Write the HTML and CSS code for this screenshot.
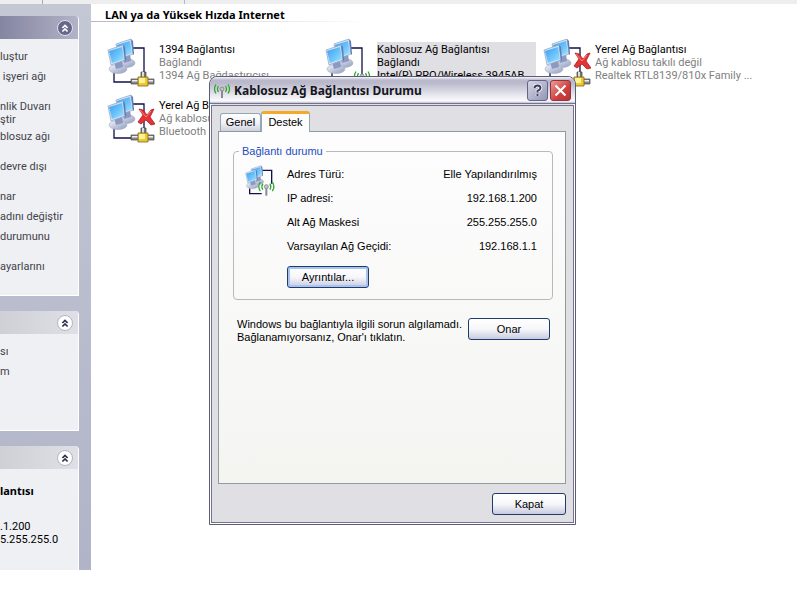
FILE: index.html
```html
<!DOCTYPE html>
<html lang="tr">
<head>
<meta charset="utf-8">
<title>Ağ Bağlantıları</title>
<link rel="stylesheet" href="styles.css">
</head>
<body>
<svg class="defs" aria-hidden="true">
  <defs>
    <linearGradient id="screen" x1="0" y1="0" x2="1" y2="1">
      <stop offset="0" stop-color="#3a9df0"/><stop offset="0.55" stop-color="#6cc4fb"/><stop offset="1" stop-color="#a5e6fd"/>
    </linearGradient>
    <linearGradient id="foot" x1="0" y1="0" x2="1" y2="1">
      <stop offset="0" stop-color="#f4f6fb"/><stop offset="1" stop-color="#8f9bbd"/>
    </linearGradient>
    <g id="monitor">
      <ellipse cx="11" cy="27" rx="9" ry="4.500" fill="url(#foot)" stroke="#a3abc6" stroke-width="0.600"/>
      <path d="M7 20l8-2 1 7-7 2z" fill="#8c99c2"/>
      <path d="M1 8L16 3l2 15-14 5z" fill="#d4e3f6" stroke="#8aa2c6" stroke-width="0.700"/>
      <path d="M2 9l13-4 2 12-12 4z" fill="url(#screen)"/>
      <path d="M16 3l2 2 1 13-1 1z" fill="#5d7db4"/>
    </g>
    <g id="pair">
      <use href="#monitor" x="8" y="-2"/>
      <use href="#monitor" x="0" y="4"/>
    </g>
    <g id="plug">
      <path d="M34 34h5v6h-5z" fill="#777" stroke="#444" stroke-width="0.700"/><path d="M35 34h2v6h-2z" fill="#ddd"/>
      <path d="M24 41h23v5H24z" fill="#888" stroke="#444" stroke-width="0.700"/><path d="M25 42h21v1.500H25z" fill="#eee"/>
      <path d="M31 39h10v9H31z" fill="#edc82e" stroke="#76651a" stroke-width="0.800"/><path d="M32 40h6v5h-6z" fill="#fff09a"/>
    </g>
    <g id="cross">
      <path d="M34 18l4 1 4 5 4-5 3-1-4 8 5 7-4 1-5-5-5 4-3-2 5-7z" fill="#e23437" stroke="#b01c22" stroke-width="0.800"/>
      <path d="M35 19l6 7 5-6" fill="none" stroke="#f78a82" stroke-width="1"/>
    </g>
    <g id="antenna" fill="none">
      <path d="M8 8v8" stroke="#8a8a94" stroke-width="2"/>
      <circle cx="8" cy="7" r="2" fill="#bfc4c9" stroke="#7d8288" stroke-width="0.800"/>
      <path d="M4.500 4Q2.500 7 4.500 10M11.500 4Q13.500 7 11.500 10M2 2.500Q-1 7 2 11.500M14 2.500Q17 7 14 11.500" stroke="#2fa52f" stroke-width="1.300"/>
    </g>
    <g id="chevrons" fill="none" stroke-width="2">
      <path d="M5 8l3-3 3 3M5 12l3-3 3 3"/>
    </g>
  </defs>
</svg>

<div class="toolbar-edge"><span class="first-tick"></span><span class="second-tick"></span></div>

<div class="explorer">
  <aside class="tasks">
    <section class="panel panel-main">
      <header><button class="collapse dark" type="button" aria-label="Daralt"><svg viewBox="0 0 16 16"><use href="#chevrons"/></svg></button></header>
      <ul>
        <li><a href="#">luştur</a></li>
        <li class="tall"><a href="#">&nbsp;işyeri ağı</a></li>
        <li class="tall"><a href="#">nlik Duvarı<br>ştir</a></li>
        <li class="tall"><a href="#">blosuz ağı</a></li>
        <li class="tall"><a href="#">devre dışı</a></li>
        <li><a href="#">nar</a></li>
        <li><a href="#">adını değiştir</a></li>
        <li class="tall"><a href="#">durumunu</a></li>
        <li class="tall"><a href="#">ayarlarını</a></li>
      </ul>
    </section>
    <section class="panel panel-places">
      <header><button class="collapse" type="button" aria-label="Daralt"><svg viewBox="0 0 16 16"><use href="#chevrons"/></svg></button></header>
      <ul>
        <li><a href="#">sı</a></li>
        <li><a href="#">m</a></li>
      </ul>
    </section>
    <section class="panel panel-details">
      <header><button class="collapse" type="button" aria-label="Daralt"><svg viewBox="0 0 16 16"><use href="#chevrons"/></svg></button></header>
      <div class="details">
        <strong>lantısı</strong>
        <p>.1.200<br>5.255.255.0</p>
      </div>
    </section>
  </aside>

  <main class="connections">
    <h1>LAN ya da Yüksek Hızda Internet</h1>
    <div class="tiles">
      <article class="tile">
        <svg class="tile-icon" viewBox="0 0 48 50"><path d="M26 10h11v26M7 35v9h18" fill="none" stroke="#10104c" stroke-width="1.300"/><use href="#pair"/><use href="#plug"/></svg>
        <div class="tile-text"><h2>1394 Bağlantısı</h2><p>Bağlandı</p><p>1394 Ağ Bağdaştırıcısı</p></div>
      </article>
      <article class="tile selected">
        <svg class="tile-icon" viewBox="0 0 48 50"><path d="M26 10h11v26M7 35v9h18" fill="none" stroke="#10104c" stroke-width="1.300"/><use href="#pair"/><use href="#antenna" x="29" y="31"/></svg>
        <div class="tile-text"><h2>Kablosuz Ağ Bağlantısı</h2><p>Bağlandı</p><p>Intel(R) PRO/Wireless 3945AB</p></div>
      </article>
      <article class="tile">
        <svg class="tile-icon" viewBox="0 0 48 50"><path d="M26 10h11v26M7 35v9h18" fill="none" stroke="#10104c" stroke-width="1.300"/><use href="#pair"/><use href="#plug"/><use href="#cross" x="-2" y="-3"/></svg>
        <div class="tile-text"><h2>Yerel Ağ Bağlantısı</h2><p>Ağ kablosu takılı değil</p><p>Realtek RTL8139/810x Family ...</p></div>
      </article>
      <article class="tile">
        <svg class="tile-icon" viewBox="0 0 48 50"><path d="M26 10h11v26M7 35v9h18" fill="none" stroke="#10104c" stroke-width="1.300"/><use href="#pair"/><use href="#plug"/><use href="#cross" x="-2" y="-3"/></svg>
        <div class="tile-text"><h2>Yerel Ağ B</h2><p>Ağ kablosu</p><p>Bluetooth</p></div>
      </article>
    </div>
  </main>
</div>

<div class="dialog" role="dialog" aria-labelledby="dialog-title">
  <div class="titlebar">
    <svg class="title-icon" viewBox="0 0 16 16"><use href="#antenna"/></svg>
    <h2 id="dialog-title">Kablosuz Ağ Bağlantısı Durumu</h2>
    <button class="caption help" type="button" aria-label="Yardım"><svg viewBox="0 0 19 19"><path d="M6.500 7Q6.500 4.500 9.500 4.500T12.500 7Q12.500 8.500 9.500 10v1.500M9.500 13v2" fill="none" stroke="#fff" stroke-width="3.500"/><path d="M6.500 7Q6.500 4.500 9.500 4.500T12.500 7Q12.500 8.500 9.500 10v1.500M9.500 13v2" fill="none" stroke="#3b3d5c" stroke-width="2"/></svg></button>
    <button class="caption close" type="button" aria-label="Kapat"><svg viewBox="0 0 19 19"><path d="M4.500 4.500l10 10M14.500 4.500l-10 10" stroke="#fff" stroke-width="2.200"/></svg></button>
  </div>
  <div class="dialog-body">
    <div class="tabs" role="tablist">
      <button class="tab" type="button" role="tab" aria-selected="false">Genel</button>
      <button class="tab active" type="button" role="tab" aria-selected="true">Destek</button>
    </div>
    <div class="page" role="tabpanel">
      <fieldset>
        <legend>Bağlantı durumu</legend>
        <svg class="status-icon" viewBox="0 0 48 48"><path d="M26 8h14v20M7 35v8h18" fill="none" stroke="#10104c" stroke-width="2"/><use href="#pair"/><g transform="translate(20 22) scale(1.500)"><use href="#antenna"/></g></svg>
        <div class="status">
          <dl>
            <div><dt>Adres Türü:</dt><dd>Elle Yapılandırılmış</dd></div>
            <div><dt>IP adresi:</dt><dd>192.168.1.200</dd></div>
            <div><dt>Alt Ağ Maskesi</dt><dd>255.255.255.0</dd></div>
            <div><dt>Varsayılan Ağ Geçidi:</dt><dd>192.168.1.1</dd></div>
          </dl>
          <button class="push default" type="button">Ayrıntılar...</button>
        </div>
      </fieldset>
      <div class="repair">
        <p>Windows bu bağlantıyla ilgili sorun algılamadı.<br>Bağlanamıyorsanız, Onar'ı tıklatın.</p>
        <button class="push" type="button">Onar</button>
      </div>
    </div>
    <div class="actions"><button class="push narrow" type="button">Kapat</button></div>
  </div>
</div>
</body>
</html>
```
FILE: styles.css
```css
* { box-sizing: border-box; }

body {
  margin: 0;
  position: relative;
  overflow: hidden;
  background: #fff;
  color: #000;
  font: 11px/13px Roboto, sans-serif;
}

h1, h2, p, ul, dl, dd { margin: 0; padding: 0; }
h1, h2 { font-size: inherit; }
button { font: inherit; color: inherit; padding: 0; }

.defs { position: absolute; width: 0; height: 0; }

.toolbar-edge { display: flex; height: 4px; background: #efeeee; }
.first-tick { width: 43px; border-right: 1px solid #aaa; }
.second-tick { width: 142px; border-right: 1px solid #b5b5d0; }

.explorer { display: flex; align-items: flex-start; }

/* Task pane */
.tasks {
  flex: none;
  width: 91px;
  padding: 12px 12px 0 0;
  display: flex;
  flex-direction: column;
  gap: 15px;
  background: linear-gradient(#c4c8d4, #b1b3c8);
}

.panel {
  background: #eff0f4;
  border-right: 1px solid #fff;
  border-bottom: 1px solid #fff;
  border-top-right-radius: 4px;
  white-space: nowrap;
}
.panel header {
  display: flex;
  justify-content: flex-end;
  align-items: center;
  height: 23px;
  padding-right: 5px;
  border-top-right-radius: 3px;
  background: linear-gradient(90deg, #cfd0d5, #dfdfe7);
}
.panel-main header { background: linear-gradient(90deg, #8485a0, #b2b3c6); }

.collapse {
  width: 16px;
  height: 16px;
  border: 1px solid #b4b4c4;
  border-radius: 50%;
  background: #fff;
  stroke: #30304e;
}
.collapse.dark { border-color: #e2e2ee; background: #66678a; stroke: #fff; }
.collapse svg { display: block; width: 14px; height: 14px; }

.panel ul {
  display: flex;
  flex-direction: column;
  gap: 4px;
  padding: 11px 0 9px;
  list-style: none;
}
.panel li { min-height: 16px; }
.panel li.tall { min-height: 26px; }
.panel a { color: #42424a; text-decoration: none; }
.panel-places ul { padding-bottom: 49px; }
.panel-details { border-bottom: 0; }
.details { padding: 15px 0 24px; }
.details strong { font-family: "Noto Sans", sans-serif; }
.details p { padding-top: 22px; }

/* Connection list */
.connections { flex: 1; min-width: 0; }
.connections h1 {
  padding: 4px 14px 1px;
  font-family: "Noto Sans", sans-serif;
  background: linear-gradient(90deg, #b9b9c6, #fff) left bottom / 280px 1px no-repeat;
}
.tiles {
  display: grid;
  grid-template-columns: repeat(auto-fill, 218px);
  row-gap: 6px;
  padding: 16px 0 0 16px;
}
.tile { display: flex; gap: 4px; height: 50px; white-space: nowrap; }
.tile-icon { flex: none; width: 48px; height: 50px; }
.tile-text { padding-top: 5px; color: #808080; }
.tile h2 { font-weight: normal; color: #000; }
.selected .tile-text {
  height: 43px;
  width: 159px;
  margin-top: 4px;
  padding-top: 1px;
  overflow: hidden;
  background: #e0dfe3;
  color: #000;
}

/* Status dialog */
.dialog {
  position: absolute;
  left: 209px;
  top: 76px;
  width: 367px;
  border: 1px solid #5c5c76;
  border-radius: 8px 8px 0 0;
  background: #e0dfe3;
  font-family: "Liberation Sans", sans-serif;
}
.titlebar {
  display: flex;
  align-items: center;
  gap: 2px;
  height: 27px;
  padding: 0 4px;
  border-bottom: 1px solid #73738b;
  border-radius: 7px 7px 0 0;
  background: linear-gradient(#f6f6fa 0, #b9b9cb 3px, #b9b9cb 6px, #e3e3eb 17px, #fbfbfd 24px, #bdbdcd 26px);
}
.title-icon { width: 16px; height: 16px; }
.titlebar h2 { flex: 1; padding: 2px 0 0 2px; font: bold 12px/16px "Noto Sans", sans-serif; color: #16161e; white-space: nowrap; }
.caption { width: 21px; height: 21px; border: 1px solid #62658a; border-radius: 3px; }
.caption svg { display: block; width: 19px; height: 19px; }
.help { background: linear-gradient(135deg, #d5d6e6, #9496b4); }
.close { background: linear-gradient(135deg, #ef9a94, #cf3f3c 60%, #b73133); border-color: #8e3444; }

.dialog-body {
  padding: 7px 7px 7px 6px;
  border: 2px solid #fff;
  border-top: 0;
  outline: 1px solid #73738b;
  outline-offset: -2px;
}

.tabs { display: flex; align-items: flex-end; padding-left: 2px; }
.tab {
  width: 41px;
  height: 18px;
  border: 1px solid #91a7b4;
  border-bottom: 0;
  border-radius: 3px 3px 0 0;
  background: linear-gradient(#fff, #f2f2f7 50%, #cfd0df);
}
.tab.active {
  width: 49px;
  height: 21px;
  border-top: 3px solid #f5a928;
  background: #fdfdfd;
  z-index: 1;
  margin-bottom: -1px;
  padding-bottom: 2px;
}

.page {
  min-height: 353px;
  padding: 13px 12px 14px 14px;
  border: 1px solid #919b9c;
  background: linear-gradient(#fdfdfe, #f4f4f1);
}

fieldset {
  display: flex;
  gap: 10px;
  min-width: 0;
  margin: 0;
  padding: 7px 15px 11px 11px;
  border: 1px solid #b8bab8;
  border-radius: 4px;
}
legend { margin-left: -6px; padding: 0 3px; color: #1c4cc0; }
.status-icon { flex: none; width: 32px; height: 32px; }
.status { flex: 1; }
.status dl { padding-bottom: 5px; }
.status dl div { display: flex; justify-content: space-between; height: 24px; line-height: 18px; white-space: nowrap; }

.push {
  width: 82px;
  height: 22px;
  border: 1px solid #1d3c6c;
  border-radius: 3px;
  background: linear-gradient(#fff, #f7f7fb 50%, #c9cade);
}
.push.default { box-shadow: inset 0 0 0 2px #a9c3f0; }
.push.narrow { width: 74px; }

.repair { display: flex; justify-content: space-between; padding: 18px 3px 0 4px; white-space: nowrap; }
.actions { display: flex; justify-content: flex-end; padding-top: 9px; }
```
